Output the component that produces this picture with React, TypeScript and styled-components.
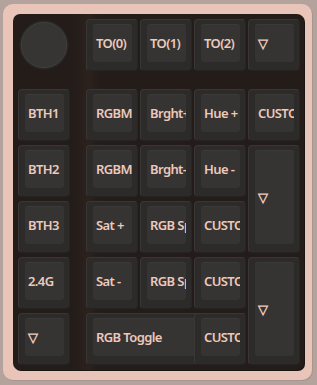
import styled, { createGlobalStyle } from 'styled-components';

type KeyDef = {
  label: string;
  col: number;
  row: number;
  w?: number;
  h?: number;
};

const keys: KeyDef[] = [
  { label: 'TO(0)', col: 3, row: 1 },
  { label: 'TO(1)', col: 4, row: 1 },
  { label: 'TO(2)', col: 5, row: 1 },
  { label: '▽', col: 6, row: 1 },

  { label: 'BTH1', col: 1, row: 3 },
  { label: 'RGBMode+', col: 3, row: 3 },
  { label: 'Brght+', col: 4, row: 3 },
  { label: 'Hue +', col: 5, row: 3 },
  { label: 'CUSTOM', col: 6, row: 3 },

  { label: 'BTH2', col: 1, row: 4 },
  { label: 'RGBMode-', col: 3, row: 4 },
  { label: 'Brght-', col: 4, row: 4 },
  { label: 'Hue -', col: 5, row: 4 },
  { label: '▽', col: 6, row: 4, h: 2 },

  { label: 'BTH3', col: 1, row: 5 },
  { label: 'Sat +', col: 3, row: 5 },
  { label: 'RGB Speed+', col: 4, row: 5 },
  { label: 'CUSTOM', col: 5, row: 5 },

  { label: '2.4G', col: 1, row: 6 },
  { label: 'Sat -', col: 3, row: 6 },
  { label: 'RGB Speed-', col: 4, row: 6 },
  { label: 'CUSTOM', col: 5, row: 6 },
  { label: '▽', col: 6, row: 6, h: 2 },

  { label: '▽', col: 1, row: 7 },
  { label: 'RGB Toggle', col: 3, row: 7, w: 2 },
  { label: 'CUSTOM', col: 5, row: 7 },
];

const GlobalStyle = createGlobalStyle`
  html, body {
    margin: 0;
    padding: 0;
    background: #b4a39d;
  }

  body {
    font-family: "Noto Sans", "Open Sans", sans-serif;
  }
`;

const App = () => {
  return (
    <Page>
      <GlobalStyle />
      <Case>
        <Plate>
          <KnobSlot>
            <Knob />
          </KnobSlot>
          {keys.map((key, i) => (
            <Key
              key={i}
              $col={key.col}
              $row={key.row}
              $w={key.w ?? 1}
              $h={key.h ?? 1}
            >
              <Cap>
                <Legend>{key.label}</Legend>
              </Cap>
            </Key>
          ))}
        </Plate>
      </Case>
    </Page>
  );
};

export default App;

// rotary encoder, knurled edge drawn with a dashed stroke
const Knob = () => (
  <svg width="52" height="52" viewBox="0 0 52 52">
    <circle
      cx="26"
      cy="26"
      r="24"
      fill="#2b2a2a"
      stroke="#2b2a2a"
      strokeWidth="1.4"
      strokeDasharray="1.1 0.9"
    />
    <circle cx="26" cy="26" r="22.6" fill="#363534" stroke="#424140" strokeWidth="0.9" />
  </svg>
);

const Page = styled.div`
  width: 317px;
  height: 385px;
  box-sizing: border-box;
  padding: 4px 0 0 3px;
`;

const Case = styled.div`
  width: 309px;
  box-sizing: border-box;
  padding: 10px 8px 10px 10px;

  background-color: #e8c5b8;
  border-radius: 10px;
  box-shadow: 1px 1px 0 #a9958f;
`;

const Plate = styled.div`
  display: grid;
  grid-template-columns: 52px 12px repeat(4, 52px);
  grid-template-rows: 52px 10px repeat(5, 52px);
  column-gap: 2px;
  row-gap: 4px;

  padding: 5px 4px 5px 5px;

  background-color: #231c19;
  background-image: linear-gradient(90deg, #231c19 20%, #2c211d 26%, #231c19 30%);
  border-radius: 7px;
  box-shadow: 1px 1px 0 #1a1412;
`;

const KnobSlot = styled.div`
  grid-column: 1;
  grid-row: 1;

  display: flex;
  align-items: center;
  justify-content: center;
`;

const Key = styled.div<{ $col: number; $row: number; $w: number; $h: number }>`
  grid-column: ${({ $col, $w }) => `${$col} / span ${$w === 2 ? 3 : 1}`};
  grid-row: ${({ $row, $h }) => `${$row} / span ${$h}`};

  display: flex;
  box-sizing: border-box;
  padding: 4px 5px 8px 6px;

  background-color: #2c2b2a;
  border: 1px solid #383736;
  border-right-color: #272625;
  border-bottom-color: #252423;
  border-radius: 4px;
`;

const Cap = styled.div`
  flex: 1;
  display: flex;
  align-items: center;
  min-width: 0;
  overflow: hidden;

  background-color: #353433;
  border-radius: 3px;
  box-shadow: 0 1px 0 #3b3a39 inset;
`;

const Legend = styled.span`
  padding-left: 3px;

  color: #ecc9bb;
  font-size: 13px;
  font-weight: 600;
  letter-spacing: -0.6px;
  white-space: nowrap;
`;
